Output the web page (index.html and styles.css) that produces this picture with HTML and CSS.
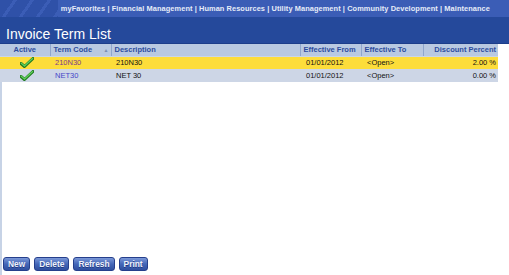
FILE: index.html
```html
<html lang="en">
  <head>
    <meta charset="UTF-8" />
    <title>Invoice Term List</title>
    <link rel="stylesheet" href="styles.css">
  </head>
  <body>
    <!-- Top menu -->
    <div class="topbar">
      <nav class="menu">
        <a href="#">myFavorites</a> |
        <a href="#">Financial Management</a> |
        <a href="#">Human Resources</a> |
        <a href="#">Utility Management</a> |
        <a href="#">Community Development</a> |
        <a href="#">Maintenance</a>
      </nav>
    </div>

    <!-- Title -->
    <div class="titlebar">Invoice Term List</div>

    <!-- Grid -->
    <div class="content">
      <table class="grid">
        <colgroup>
          <col style="width: 50px">
          <col style="width: 61px">
          <col style="width: 189px">
          <col style="width: 61px">
          <col style="width: 62px">
          <col style="width: 75px">
        </colgroup>
        <thead>
          <tr>
            <th class="center">Active</th>
            <th class="col-code">Term Code <span class="sort">&#9650;</span></th>
            <th>Description</th>
            <th>Effective From</th>
            <th>Effective To</th>
            <th class="right">Discount Percent</th>
          </tr>
        </thead>
        <tbody>
          <tr class="selected">
            <td class="center"><svg class="check" width="14" height="11" viewBox="0 0 14 11"><path d="M1 6.5 L4.5 9.5 L13 1.5" fill="none" stroke="#1f7a1f" stroke-width="3" stroke-linecap="round" stroke-linejoin="round"/><path d="M1.3 6.3 L4.5 9 L12.6 1.6" fill="none" stroke="#5fd05a" stroke-width="1.3" stroke-linecap="round" stroke-linejoin="round"/></svg></td>
            <td class="code sel-code">210N30</td>
            <td>210N30</td>
            <td>01/01/2012</td>
            <td>&lt;Open&gt;</td>
            <td class="right">2.00 %</td>
          </tr>
          <tr class="alt">
            <td class="center"><svg class="check" width="14" height="11" viewBox="0 0 14 11"><path d="M1 6.5 L4.5 9.5 L13 1.5" fill="none" stroke="#1f7a1f" stroke-width="3" stroke-linecap="round" stroke-linejoin="round"/><path d="M1.3 6.3 L4.5 9 L12.6 1.6" fill="none" stroke="#5fd05a" stroke-width="1.3" stroke-linecap="round" stroke-linejoin="round"/></svg></td>
            <td class="code">NET30</td>
            <td>NET 30</td>
            <td>01/01/2012</td>
            <td>&lt;Open&gt;</td>
            <td class="right">0.00 %</td>
          </tr>
        </tbody>
      </table>
    </div>

    <!-- Buttons -->
    <div class="buttons">
      <button>New</button>
      <button>Delete</button>
      <button>Refresh</button>
      <button>Print</button>
    </div>
  </body>
</html>
```

FILE: styles.css
```css
body {
  margin: 0;
  padding: 0;
  font-family: "Liberation Sans", Arial, sans-serif;
  background-color: white;
  width: 509px;
  height: 275px;
  display: flex;
  flex-direction: column;
  overflow: hidden;
}
.topbar {
  height: 17px;
  background-color: #3b5db6;
  background-image: repeating-linear-gradient(125deg, #2f51a8 0 11px, #3b5db6 11px 14px);
  background-size: 58px 17px;
  background-repeat: no-repeat;
  display: flex;
  justify-content: flex-end;
  align-items: center;
}
.menu {
  flex-shrink: 0;
  padding-right: 19px;
  color: #e6ecf8;
  font-size: 7.4px;
  letter-spacing: 0.08px;
  font-weight: bold;
  white-space: nowrap;
}
.menu a {
  color: #e6ecf8;
  text-decoration: none;
}
.titlebar {
  height: 27px;
  background-color: #25499b;
  color: white;
  font-size: 14px;
  padding-left: 6px;
  line-height: 34px;
  box-sizing: border-box;
  border-bottom: 1px solid #1c3d8a;
}
.content {
  flex-grow: 1;
  border-left: 2px solid #c7d3e6;
}
.grid {
  width: 498px;
  table-layout: fixed;
  border-collapse: collapse;
  font-size: 7.5px;
  margin-left: -2px;
}
.grid th {
  background-color: #b9c9e1;
  color: #2d4d9e;
  font-weight: bold;
  text-align: left;
  height: 12px;
  padding: 0 3px;
  border-left: 1px solid #8fa6cc;
  border-bottom: 1px solid #cad6e8;
  white-space: nowrap;
  overflow: hidden;
}
.grid th:first-child {
  border-left: none;
}
.grid td {
  height: 13px;
  padding: 0 3px;
  color: #111;
  white-space: nowrap;
}
.grid th.center,
.grid td.center {
  text-align: center;
}
.grid th.right,
.grid td.right {
  text-align: right;
  padding-right: 2px;
}
.grid th.col-code {
  position: relative;
}
.sort {
  position: absolute;
  right: 2px;
  top: 3px;
  font-size: 5px;
  color: #7b8fb5;
}
.grid td.code {
  padding-left: 5px;
  color: #4646c8;
}
.grid td.sel-code {
  color: #7a3c8c;
}
.grid td:nth-child(3) {
  padding-left: 5px;
}
.grid td:nth-child(4),
.grid td:nth-child(5) {
  padding-left: 6px;
}
.selected td {
  background-color: #fddd3a;
  border-top: 1px solid #f2c21a;
}
.alt td {
  background-color: #cdd6e6;
}
.check {
  display: block;
  margin: 0 auto;
  transform: translateX(2px);
}
.buttons {
  height: 18px;
  display: flex;
  gap: 4px;
  padding-left: 1px;
  align-items: flex-start;
  border-left: 2px solid #c7d3e6;
}
.buttons button {
  font-family: "Liberation Sans", Arial, sans-serif;
  font-size: 8.4px;
  font-weight: bold;
  color: #eef2fb;
  text-shadow: 0 1px 0 #1d3780;
  height: 14px;
  padding: 0 4px;
  border: 1px solid #253f8c;
  border-radius: 3px;
  background: linear-gradient(#7b98d8, #4467b8 50%, #2f4f9f);
  cursor: pointer;
}
```
